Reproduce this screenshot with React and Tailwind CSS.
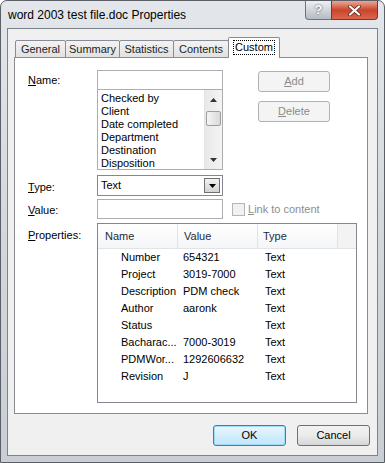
import React from 'react';

const font = "font-['Liberation_Sans',Arial,sans-serif]";

function Tab({ label, selected, width }) {
  if (selected) {
    return (
      <div
        className={`${width} h-[21px] -ml-px relative z-10 flex items-start justify-center pt-[2px] bg-white border border-b-0 border-[#898c95] rounded-t-[2px]`}
      >
        <span className="border border-dotted border-black px-[1px] leading-[13px]">{label}</span>
      </div>
    );
  }
  return (
    <div
      className={`${width} h-[18px] -ml-px flex items-center justify-center bg-gradient-to-b from-[#f3f3f3] to-[#e1e1e1] border border-[#898c95] rounded-t-[2px] text-[#1e1e1e]`}
    >
      {label}
    </div>
  );
}

function DisabledButton({ children }) {
  return (
    <div className="w-[72px] h-[21px] flex items-center justify-center rounded-[3px] border border-[#adb2b5] bg-[#f4f4f4] text-[#8b8b8b]">
      {children}
    </div>
  );
}

function ScrollArrow({ up }) {
  return (
    <svg width="7" height="4" viewBox="0 0 7 4">
      {up ? <path d="M0 4 L3.5 0 L7 4 Z" fill="#333" /> : <path d="M0 0 L3.5 4 L7 0 Z" fill="#333" />}
    </svg>
  );
}

const props = [
  ['Number', '654321'],
  ['Project', '3019-7000'],
  ['Description', 'PDM check'],
  ['Author', 'aaronk'],
  ['Status', ''],
  ['Bacharac...', '7000-3019'],
  ['PDMWor...', '1292606632'],
  ['Revision', 'J'],
];

export default function App() {
  return (
    <div className={`w-[385px] h-[463px] bg-white ${font} text-[11px] text-black`}>
      <div className="h-full flex flex-col rounded-t-[7px] border border-[#5c6066] bg-gradient-to-b from-[#e3e6ea] via-[#d4d8dd] to-[#c9ced4]">
        {/* title bar */}
        <div className="h-[27px] flex items-start shrink-0">
          <div className="pl-[7px] pt-[7px] text-[12px] leading-[14px] text-black">word 2003 test file.doc Properties</div>
          <div className="ml-auto mr-[6px] flex">
            <div className="w-[27px] h-[19px] flex items-center justify-center rounded-bl-[4px] border border-t-0 border-[#6f7479] bg-gradient-to-b from-[#eef0f2] via-[#d2d6db] to-[#b6bcc4] text-white font-bold text-[13px] [text-shadow:0_0_2px_#333]">
              ?
            </div>
            <div className="w-[47px] h-[19px] -ml-px flex items-center justify-center rounded-br-[4px] border border-t-0 border-[#6f3a30] bg-gradient-to-b from-[#e9a896] via-[#c9442c] to-[#d9664d]">
              <svg width="13" height="11" viewBox="0 0 13 11">
                <path d="M2 1.5 L11 9.5 M11 1.5 L2 9.5" stroke="#5a1f14" strokeWidth="3.6" strokeLinecap="round" />
                <path d="M2 1.5 L11 9.5 M11 1.5 L2 9.5" stroke="#fff" strokeWidth="2.2" strokeLinecap="round" />
              </svg>
            </div>
          </div>
        </div>

        {/* client area */}
        <div className="flex-1 mx-[6px] mb-[6px] border border-[#7d838a] bg-[#f0f0f0] flex flex-col">
          {/* tab strip */}
          <div className="pt-[8px] pl-[8px] flex items-end -mb-px relative z-10">
            <Tab label="General" width="w-[51px]" />
            <Tab label="Summary" width="w-[55px]" />
            <Tab label="Statistics" width="w-[55px]" />
            <Tab label="Contents" width="w-[56px]" />
            <Tab label="Custom" width="w-[52px]" selected />
          </div>

          {/* panel */}
          <div className="flex-1 ml-[6px] mr-[9px] border border-[#898c95] bg-white pl-[13px] pt-[12px] flex flex-col">
            {/* name row */}
            <div className="flex">
              <div className="w-[69px] pt-[2px]">
                <span className="underline">N</span>ame:
              </div>
              <div className="w-[126px] flex flex-col">
                <div className="h-[20px] border border-[#abadb3] bg-white" />
                <div className="h-[81px] -mt-px border border-[#abadb3] flex overflow-hidden">
                  <div className="flex-1 pl-[3px] pt-[2px] leading-[13px]">
                    <div>Checked by</div>
                    <div>Client</div>
                    <div>Date completed</div>
                    <div>Department</div>
                    <div>Destination</div>
                    <div>Disposition</div>
                  </div>
                  <div className="w-[18px] bg-gradient-to-r from-[#e8e8e8] to-[#f4f4f4] flex flex-col items-center border-l border-[#e2e2e2]">
                    <div className="h-[18px] flex items-center justify-center mt-[1px]">
                      <ScrollArrow up />
                    </div>
                    <div className="w-[15px] h-[15px] mt-[2px] rounded-[2px] border border-[#9d9d9d] bg-gradient-to-r from-[#f4f4f4] to-[#d9d9d9]" />
                    <div className="mt-auto h-[18px] flex items-center justify-center">
                      <ScrollArrow />
                    </div>
                  </div>
                </div>
              </div>
              <div className="ml-[35px] pt-[1px] flex flex-col gap-[9px]">
                <DisabledButton>
                  <span className="underline">A</span>dd
                </DisabledButton>
                <DisabledButton>
                  <span className="underline">D</span>elete
                </DisabledButton>
              </div>
            </div>

            {/* type row */}
            <div className="flex mt-[5px]">
              <div className="w-[69px] pt-[4px]">
                <span className="underline">T</span>ype:
              </div>
              <div className="w-[126px] h-[21px] border border-[#828790] bg-white flex items-center pl-[3px] pr-[2px]">
                <span>Text</span>
                <div className="ml-auto w-[16px] h-[15px] border border-[#707070] bg-gradient-to-b from-[#f2f2f2] to-[#d4d4d4] flex items-center justify-center">
                  <svg width="7" height="4" viewBox="0 0 7 4">
                    <path d="M0 0 L3.5 4 L7 0 Z" fill="#000" />
                  </svg>
                </div>
              </div>
            </div>

            {/* value row */}
            <div className="flex mt-[3px]">
              <div className="w-[69px] pt-[3px]">
                <span className="underline">V</span>alue:
              </div>
              <div className="w-[126px] h-[20px] border border-[#abadb3] bg-white" />
              <div className="ml-[9px] flex items-center gap-[3px] text-[#8d8d8d]">
                <div className="w-[13px] h-[13px] border border-[#b5b5b5] bg-[#f1f1f1]" />
                <span>
                  <span className="underline">L</span>ink to content
                </span>
              </div>
            </div>

            {/* properties row */}
            <div className="flex mt-[4px]">
              <div className="w-[69px] pt-[4px]">
                <span className="underline">P</span>roperties:
              </div>
              <div className="w-[260px] h-[180px] border border-[#828790] bg-white flex flex-col">
                <div className="h-[25px] flex bg-gradient-to-b from-[#ffffff] to-[#f4f5f7] border-b border-[#e2e3e5] text-[#1e2a3a]">
                  <div className="w-[80px] pl-[7px] flex items-center border-r border-[#e2e3e5]">Name</div>
                  <div className="w-[80px] pl-[6px] flex items-center border-r border-[#e2e3e5]">Value</div>
                  <div className="w-[80px] pl-[5px] flex items-center border-r border-[#e2e3e5]">Type</div>
                  <div className="flex-1 bg-[#f3f3f3]" />
                </div>
                {props.map(([n, v]) => (
                  <div key={n} className="h-[17px] flex items-center">
                    <div className="w-[80px] pl-[23px] whitespace-nowrap">{n}</div>
                    <div className="w-[80px] pl-[5px]">{v}</div>
                    <div className="w-[80px] pl-[7px]">Text</div>
                  </div>
                ))}
              </div>
            </div>
          </div>

          {/* bottom buttons */}
          <div className="flex justify-end gap-[11px] pr-[7px] mt-[11px] mb-[9px]">
            <div className="w-[73px] h-[21px] flex items-center justify-center rounded-[3px] border border-[#3c7fb1] bg-gradient-to-b from-[#eaf6fd] via-[#d4edfa] to-[#bee6fd] shadow-[inset_0_0_0_1px_#9fdbf8]">
              OK
            </div>
            <div className="w-[73px] h-[21px] flex items-center justify-center rounded-[3px] border border-[#707070] bg-gradient-to-b from-[#f2f2f2] via-[#ebebeb] to-[#d6d6d6]">
              Cancel
            </div>
          </div>
        </div>
      </div>
    </div>
  );
}
